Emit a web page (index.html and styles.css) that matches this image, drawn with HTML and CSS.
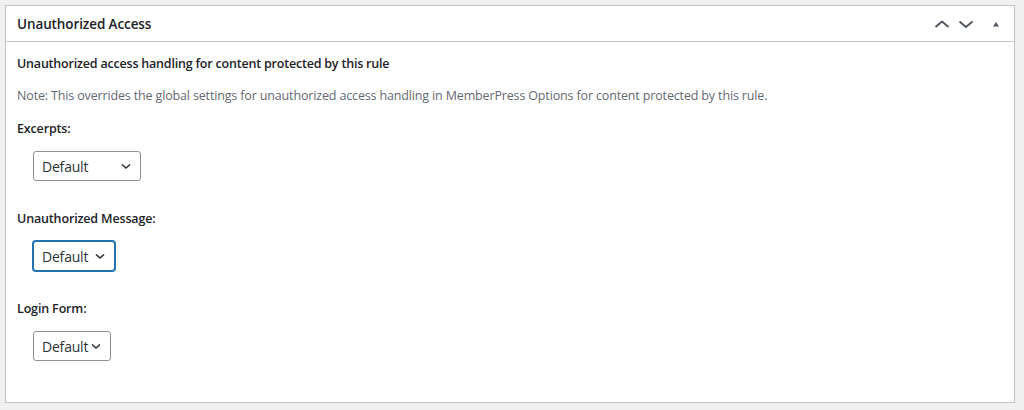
FILE: index.html
```html
<!DOCTYPE html>
<html>
<head>
<meta charset="utf-8">
<link rel="stylesheet" href="styles.css">
</head>
<body>
<div class="postbox">
  <div class="postbox-header">
    <h2 class="hndle">Unauthorized Access</h2>
    <div class="handle-actions">
      <button class="handle-btn" aria-label="Move up">
        <svg width="16" height="16" viewBox="0 0 16 16"><path d="M1.5 11 L8 5.5 L14.5 11" fill="none" stroke="#50575e" stroke-width="2"/></svg>
      </button>
      <button class="handle-btn" aria-label="Move down">
        <svg width="16" height="16" viewBox="0 0 16 16"><path d="M1.5 5.5 L8 11 L14.5 5.5" fill="none" stroke="#50575e" stroke-width="2"/></svg>
      </button>
      <button class="handle-btn toggle" aria-label="Toggle panel">
        <svg width="10" height="10" viewBox="0 0 10 10"><path d="M2 7.5 L5 3 L8 7.5 Z" fill="#50575e"/></svg>
      </button>
    </div>
  </div>
  <div class="inside">
    <p class="intro">Unauthorized access handling for content protected by this rule</p>
    <p class="note">Note: This overrides the global settings for unauthorized access handling in MemberPress Options for content protected by this rule.</p>

    <div class="field">
      <label class="field-label">Excerpts:</label>
      <div class="select w-excerpt">
        <span>Default</span>
        <svg class="chev" width="12" height="12" viewBox="0 0 12 12"><path d="M2 4.5 L6 8 L10 4.5" fill="none" stroke="#2c3338" stroke-width="1.6"/></svg>
      </div>
    </div>

    <div class="field">
      <label class="field-label">Unauthorized Message:</label>
      <div class="select focused w-message">
        <span>Default</span>
        <svg class="chev" width="12" height="12" viewBox="0 0 12 12"><path d="M2 4.5 L6 8 L10 4.5" fill="none" stroke="#2c3338" stroke-width="1.6"/></svg>
      </div>
    </div>

    <div class="field last">
      <label class="field-label">Login Form:</label>
      <div class="select w-login">
        <span>Default</span>
        <svg class="chev" width="12" height="12" viewBox="0 0 12 12"><path d="M2 4.5 L6 8 L10 4.5" fill="none" stroke="#2c3338" stroke-width="1.6"/></svg>
      </div>
    </div>
  </div>
</div>
</body>
</html>
```
FILE: styles.css
```css
html, body {
  margin: 0;
  padding: 0;
  background: #f0f0f1;
}
body {
  padding: 5px 9px 0 5px;
  font-family: "Open Sans", "Noto Sans", sans-serif;
  color: #1d2327;
  font-size: 13px;
}
.postbox {
  background: #fff;
  border: 1px solid #c3c4c7;
  box-shadow: 0 1px 1px rgba(0,0,0,0.04);
  height: 398px;
  box-sizing: border-box;
}
.postbox-header {
  display: flex;
  align-items: center;
  justify-content: space-between;
  height: 35px;
  border-bottom: 1px solid #c3c4c7;
  padding-left: 11px;
}
.hndle {
  margin: 0;
  font-size: 13.5px;
  font-weight: 600;
  color: #1d2327;
  letter-spacing: -0.1px;
}
.handle-actions {
  display: flex;
  align-items: center;
  padding-right: 6px;
}
.handle-btn {
  border: 0;
  background: none;
  padding: 0;
  width: 24px;
  height: 26px;
  display: flex;
  align-items: center;
  justify-content: center;
}
.handle-btn.toggle {
  margin-left: 6px;
}
.inside {
  padding: 12px 11px 0 11px;
}
.intro {
  margin: 0;
  line-height: 20px;
  font-weight: 600;
  font-size: 12.5px;
  letter-spacing: -0.2px;
}
.note {
  margin: 12px 0 0;
  line-height: 20px;
  color: #646970;
  font-size: 12.5px;
  letter-spacing: -0.15px;
}
.field {
  margin-top: 13px;
}
.field + .field {
  margin-top: 28px;
}
.field-label {
  display: block;
  line-height: 20px;
  font-weight: 600;
  font-size: 12.5px;
  letter-spacing: -0.15px;
  margin-bottom: 12px;
}
.select {
  margin-left: 16px;
  display: flex;
  align-items: center;
  justify-content: space-between;
  box-sizing: border-box;
  height: 30px;
  border: 1px solid #8c8f94;
  border-radius: 3px;
  padding: 0 8px 0 8px;
  font-size: 14px;
  color: #2c3338;
  background: #fff;
}
.select span {
  letter-spacing: -0.2px;
}
.select.focused {
  border-color: #2271b1;
  box-shadow: 0 0 0 1px #2271b1;
}
.w-excerpt { width: 108px; }
.w-message { width: 82px; }
.w-login { width: 78px; }
.chev {
  flex: none;
}
```
